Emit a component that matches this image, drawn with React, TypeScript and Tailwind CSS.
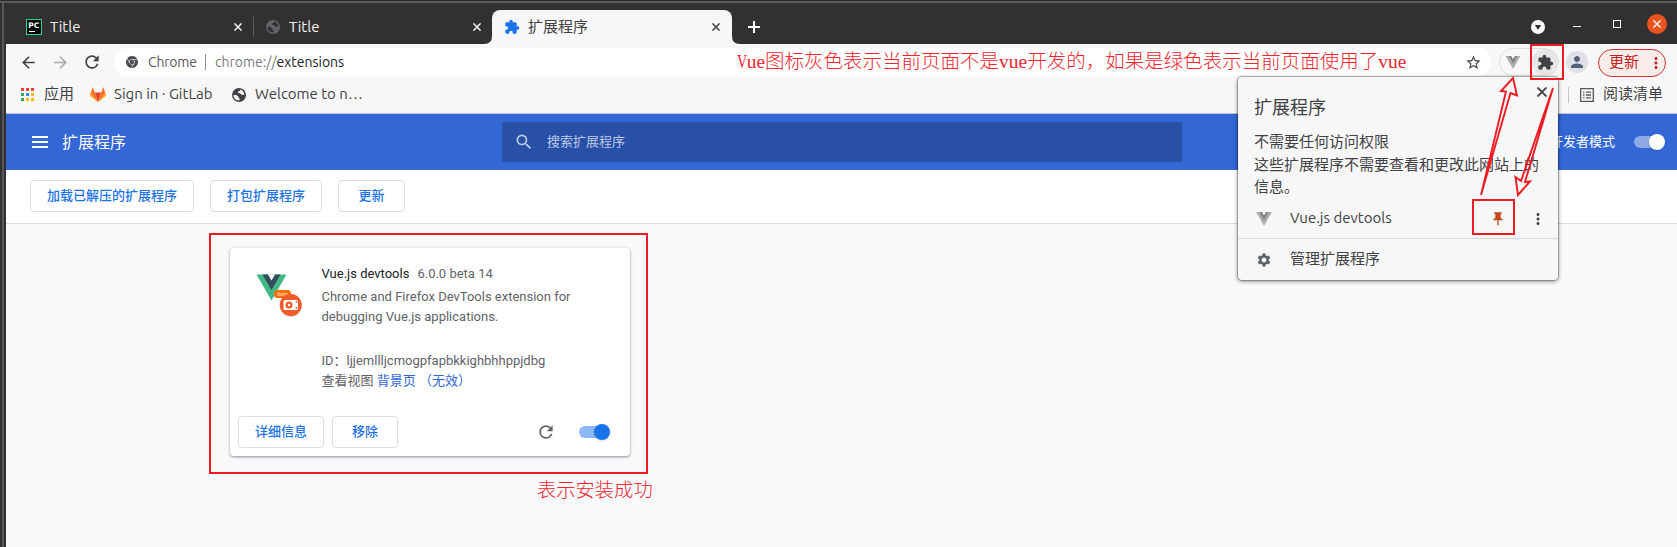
import React from "react";
import { MdStarBorder, MdRefresh, MdExtension, MdPerson, MdSettings, MdSearch, MdMoreVert, MdArrowBack, MdArrowForward, MdPushPin } from "react-icons/md";
import { SiGooglechrome } from "react-icons/si";

const uiFont = "font-['Ubuntu','Noto_Sans','Noto_Sans_CJK_SC',sans-serif]";
const webFont = "font-['Roboto','Noto_Sans_CJK_SC',sans-serif]";
const noteFont = "font-['Liberation_Serif','Noto_Sans_CJK_SC',serif]";

function Close({ className = "h-[8px] w-[8px]" }: { className?: string }) {
  return (
    <svg className={"shrink-0 " + className} viewBox="0 0 8 8" fill="none" stroke="currentColor" strokeWidth="1.5">
      <path d="M.4 .4 7.6 7.6M7.6 .4 .4 7.6" />
    </svg>
  );
}

function Globe({ className = "", cut }: { className?: string; cut: string }) {
  return (
    <svg className={"h-[14px] w-[14px] " + className} viewBox="0 0 14 14">
      <circle cx="7" cy="7" r="7" fill="currentColor" />
      <path d="M1.4 7.2c1.8-.5 3.7 0 4.6 1 .7.8.3 1.700 1.500 2v2.200C4 12.600 1.500 10.300 1.400 7.200Z" fill={cut} />
      <path d="M8.300 1.600c-.2 1-.6 1.600-1.800 1.800-.8.100-1 .9-.3 1.300.9.500 2.300.200 2.700 1.200.4 1.100 1.700 1.100 3.400.7C12 4 10.600 2.200 8.300 1.600Z" fill={cut} />
    </svg>
  );
}

function VueMark({ className = "", outer, inner }: { className?: string; outer: string; inner: string }) {
  return (
    <svg className={className} viewBox="0 0 30 26">
      <path d="M0 0h30L15 26Z" fill={outer} />
      <path d="M6 0h5.500L15 6l3.500-6H24L15 15.600Z" fill={inner} />
      <path d="M11.500 0h7L15 6Z" fill="#f7f7f7" />
    </svg>
  );
}

function Tabs() {
  return (
    <div className="flex h-[41px] shrink-0 bg-[#333031] pt-[7px] text-[15px] text-[#f4f4f4]">
      <div className="flex h-[34px] w-[247px] items-center pl-5">
        <svg className="h-4 w-4 shrink-0" viewBox="0 0 16 16">
          <rect x=".5" y=".5" width="15" height="15" fill="#080808" stroke="#21d789" />
          <text x="2.200" y="8.500" fill="#fff" fontSize="7.500" fontWeight="700" fontFamily="DejaVu Sans" textLength="11">PC</text>
          <path d="M3 12.500h6" stroke="#fff" />
        </svg>
        <span className="ml-2 w-[184px]">Title</span>
        <Close />
      </div>
      <div className="flex h-[34px] w-[239px] items-center">
        <div className="h-5 w-px bg-[#5c5a5b]" />
        <Globe className="ml-3 text-[#5f6368]" cut="#333031" />
        <span className="ml-[9px] w-[184px]">Title</span>
        <Close />
      </div>
      <div className="relative flex h-[34px] w-[240px] items-center rounded-t-[8px] bg-[#f7f7f7] pl-[12px] text-[#414141]">
        <svg className="absolute -left-2 bottom-0 h-2 w-2" viewBox="0 0 8 8"><path d="M8 0v8H0Q8 8 8 0Z" fill="#f7f7f7" /></svg>
        <svg className="absolute -right-2 bottom-0 h-2 w-2" viewBox="0 0 8 8"><path d="M0 0v8H8Q0 8 0 0Z" fill="#f7f7f7" /></svg>
        <MdExtension className="h-4 w-4 text-[#1a73e8]" />
        <span className="ml-2 w-[184px]">扩展程序</span>
        <Close />
      </div>
      <svg className="ml-[16px] mt-[11px] h-3 w-3" viewBox="0 0 12 12"><path d="M0 6h12M6 0v12" stroke="#fff" strokeWidth="2" /></svg>
      <div className="ml-auto flex pr-[10px]">
        <svg className="mt-[10px] h-[14px] w-[14px]" viewBox="0 0 14 14"><circle cx="7" cy="7" r="7" fill="#fff" /><path d="M3.700 5h6.600L7 9.700Z" fill="#333031" /></svg>
        <div className="ml-[28px] mt-[16px] h-px w-2 bg-white" />
        <div className="ml-[32px] mt-[10px] h-2 w-2 border border-white" />
        <div className="ml-[26px] mt-1 flex h-5 w-5 items-center justify-center rounded-full bg-[#e95420]"><Close /></div>
      </div>
    </div>
  );
}

function NoteV() {
  return <span className="inline-block w-[9.7px] font-normal"><span className="inline-block origin-left scale-x-[0.72]">V</span></span>;
}

function AddressBar() {
  return (
    <div className="flex h-8 shrink-0 items-center pl-[13px] pt-1 text-[15px] text-[#3f4144]">
      <MdArrowBack className="h-[19px] w-[19px]" />
      <MdArrowForward className="ml-[13px] h-[19px] w-[19px] text-[#a9a9a9]" />
      <MdRefresh className="ml-[12px] h-5 w-5" />
      <div className="ml-[12px] flex h-7 w-[1377px] items-center rounded-full bg-white pl-3">
        <SiGooglechrome className="h-3 w-3 text-[#4c4e51]" />
        <span className="ml-[10px] w-[57px] whitespace-nowrap text-[14px] tracking-[-0.2px] text-[#55585c]">Chrome</span>
        <div className="h-4 w-px bg-[#8d8f92]" />
        <div className="ml-[9px] w-[522px] whitespace-nowrap text-[14px] text-[#777b80]">chrome://<span className="text-[#202124]">extensions</span></div>
        <div className={"whitespace-nowrap text-[19.5px] font-light leading-7 text-[#f0252e] " + noteFont}>
          <NoteV /><span className="font-normal">ue</span>图标灰色表示当前页面不是<span className="font-normal">vue</span>开发的，如果是绿色表示当前页面使用了<span className="font-normal">vue</span>
        </div>
        <MdStarBorder className="ml-auto mr-[9px] h-[17px] w-[17px] shrink-0" />
      </div>
      <div className="ml-2 flex h-7 w-[60px] items-center justify-between rounded-full border border-[#dcdddd] pl-[5px]">
        <VueMark className="h-[13px] w-4" outer="#aeaeae" inner="#858585" />
        <div className="flex h-[26px] w-[26px] items-center justify-center rounded-full bg-[#e6e6e6]"><MdExtension className="h-[17px] w-[17px]" /></div>
      </div>
      <div className="ml-[7px] flex h-[22px] w-[22px] items-center justify-center rounded-full bg-[#dee1e6] text-[#546078]"><MdPerson className="h-[18px] w-[18px]" /></div>
      <div className="ml-[10px] mt-px flex h-7 w-[68px] items-center rounded-full border border-[#cf332a] bg-[#faecea] pl-[10px] text-[#c5221f]">
        <span>更新</span><MdMoreVert className="ml-2 h-[18px] w-[18px]" />
      </div>
    </div>
  );
}

const appColors = ["bg-[#ea4335]", "bg-[#ea4335]", "bg-[#ea4335]", "bg-[#34a853]", "bg-[#4285f4]", "bg-[#fbbc04]", "bg-[#34a853]", "bg-[#fbbc04]", "bg-[#fbbc04]"];

function Bookmarks() {
  return (
    <div className="flex h-[38px] shrink-0 items-center border-b border-[#bfc3cb] pl-[15px] text-[15px] text-[#3f4144]">
      <div className="grid grid-cols-3 gap-[2px]">
        {appColors.map((c, i) => <div key={i} className={"h-[3px] w-[3px] " + c} />)}
      </div>
      <span className="ml-[10px]">应用</span>
      <svg className="ml-4 h-[15px] w-4" viewBox="0 0 16 15">
        <path d="M2.800 0 .3 7.200 8 15Z" fill="#fc6d26" /><path d="M13.200 0l2.500 7.200L8 15Z" fill="#fc6d26" />
        <path d="M.9 5.500 0 8.800 8 15ZM15.100 5.500l.9 3.300L8 15Z" fill="#fca326" /><path d="M4.800 5.500h6.400L8 15Z" fill="#e24329" />
      </svg>
      <span className="ml-2 w-[118px] whitespace-nowrap">Sign in · GitLab</span>
      <Globe className="text-[#3f4144]" cut="#f7f7f7" />
      <span className="ml-[9px] whitespace-nowrap">Welcome to n…</span>
      <div className="ml-auto flex items-center pr-[14px]">
        <div className="h-4 w-px bg-[#c5c7ca]" />
        <svg className="ml-[11px] h-[14px] w-[14px]" viewBox="0 0 14 14" fill="none" stroke="#55585b" strokeWidth="1.300"><path d="M.7.7h12.600v12.600H.7ZM3 4.200h1.500M6 4.200h5M3 7h1.500M6 7h5M3 9.800h1.500M6 9.800h5" /></svg>
        <span className="ml-[9px]">阅读清单</span>
      </div>
    </div>
  );
}

function Button({ children, className }: { children: React.ReactNode; className: string }) {
  return <div className={"flex h-8 items-center justify-center rounded-[4px] border border-[#dadce0] text-[13px] font-medium text-[#1a73e8] " + className}>{children}</div>;
}

function Card() {
  return (
    <div className="flex h-[208px] w-[400px] flex-col rounded-[4px] bg-white text-[13px] leading-5 text-[#5f6368] shadow-[0_1px_2px_rgba(60,64,67,0.4),0_1px_3px_1px_rgba(60,64,67,0.15)]">
      <div className="flex h-[160px] pt-4">
        <div className="ml-[26px] mt-[10px] w-[65.500px] shrink-0">
          <svg className="h-12 w-12" viewBox="0 0 48 48">
            <path d="M.5 .5H30.500L15.500 26.500Z" fill="#41b883" />
            <path d="M6.500 .5h5.500l3.500 6 3.500-6h5.500l-9 15.600Z" fill="#35495e" />
            <path d="M12 .5h7l-3.500 6Z" fill="#fff" />
            <circle cx="35" cy="32" r="11" fill="#000" opacity=".15" />
            <rect x="18" y="16" width="17" height="8" rx="3.500" fill="#ff6d00" />
            <text x="21.500" y="22" fill="#ffe0cc" fontSize="5.500" fontFamily="Roboto">beta</text>
            <circle cx="34.700" cy="31" r="11" fill="#f05a28" />
            <rect x="27.500" y="26" width="14.500" height="10" rx="1.500" fill="#fff" />
            <circle cx="33" cy="31" r="3.500" fill="#f05a28" /><circle cx="33" cy="31" r="1.300" fill="#fff" />
            <path d="M40.300 27v2M40.300 33v2" stroke="#f05a28" />
          </svg>
        </div>
        <div>
          <div className="h-[23px]"><span className="text-[#202124]">Vue.js devtools</span><span className="ml-2">6.0.0 beta 14</span></div>
          <div className="h-[64px] w-[270px]">Chrome and Firefox DevTools extension for debugging Vue.js applications.</div>
          <div>ID：ljjemllljcmogpfapbkkighbhhppjdbg</div>
          <div>查看视图 <span className="text-[#3367d6]">背景页 （无效）</span></div>
        </div>
      </div>
      <div className="flex h-12 items-center pl-2">
        <Button className="w-[86px]">详细信息</Button>
        <Button className="ml-2 w-[66px]">移除</Button>
        <MdRefresh className="ml-[138px] h-5 w-5" />
        <div className="ml-[23px] flex h-3 w-[28px] items-center justify-end rounded-full bg-[#8cb8f3]"><div className="-mr-[3px] h-4 w-4 shrink-0 rounded-full bg-[#1a73e8] shadow" /></div>
      </div>
    </div>
  );
}

function Popup() {
  return (
    <div className={"absolute left-[1238px] top-[77px] h-[203px] w-[320px] rounded-[4px] bg-[#f7f7f7] text-[15px] text-[#3f4144] shadow-[0_0_0_1px_rgba(0,0,0,0.2),0_1px_4px_rgba(0,0,0,0.55)] " + uiFont}>
      <div className="flex h-[54px] justify-between pl-4 pr-[11px] pt-[17px] text-[18px] leading-[27px]"><span>扩展程序</span><Close className="-mt-[7px] h-[10px] w-[10px]" /></div>
      <div className="h-[68px] whitespace-nowrap pl-4 leading-[22.5px]">不需要任何访问权限<br />这些扩展程序不需要查看和更改此网站上的<br />信息。</div>
      <div className="flex h-[40px] items-center border-b border-[#d9dadb] pl-[18px]">
        <VueMark className="h-[14px] w-4" outer="#b0b0b0" inner="#858585" />
        <span className="ml-[18px] w-[200px]">Vue.js devtools</span>
        <MdPushPin className="h-4 w-4 text-[#c5481d]" />
        <MdMoreVert className="ml-[23px] h-[18px] w-[18px]" />
      </div>
      <div className="flex h-[41px] items-center pl-[18px]"><MdSettings className="h-4 w-4 text-[#5f6368]" /><span className="ml-[18px]">管理扩展程序</span></div>
    </div>
  );
}

export default function App() {
  return (
    <div className={"relative flex h-[547px] w-[1677px] flex-col overflow-hidden bg-[#2b2b2b] " + uiFont}>
      <div className="h-px shrink-0 bg-[#28292b]" />
      <div className="h-[2px] shrink-0 bg-[#5b5b5b]" />
      <div className="flex min-h-0 flex-1">
        <div className="w-[2px] bg-[#303234]" /><div className="w-[2px] bg-[#595757]" /><div className="w-[2px] bg-[#333031]" />
        <div className="flex min-w-0 flex-1 flex-col bg-[#f7f7f7]">
          <Tabs />
          <AddressBar />
          <Bookmarks />
          <div className={"flex min-h-0 flex-1 flex-col bg-[#f8f9fb] " + webFont}>
            <div className="flex h-14 shrink-0 items-center bg-[#3367d6] text-white">
              <div className="ml-[26px] flex h-3 w-4 flex-col justify-between"><div className="h-[2px] bg-white" /><div className="h-[2px] bg-white" /><div className="h-[2px] bg-white" /></div>
              <span className="ml-[14px] w-[440px] pt-px text-[16px]">扩展程序</span>
              <div className="flex h-10 w-[680px] items-center rounded-[2px] bg-[#2850a7] pl-3 text-[13px] text-[#bccbe9]"><MdSearch className="h-5 w-5" /><span className="ml-[13px]">搜索扩展程序</span></div>
              <span className="ml-[368px] text-[13px]">开发者模式</span>
              <div className="ml-[19px] flex h-3 w-[28px] items-center justify-end rounded-full bg-[#8da9e6]"><div className="-mr-[3px] h-4 w-4 shrink-0 rounded-full bg-white shadow" /></div>
            </div>
            <div className="flex h-[54px] shrink-0 gap-4 border-b border-[#dadce0] bg-white pl-6 pt-[10px]">
              <Button className="w-[164px]">加载已解压的扩展程序</Button><Button className="w-[112px]">打包扩展程序</Button><Button className="w-[67px]">更新</Button>
            </div>
            <div className="pl-[224px] pt-6"><Card /></div>
            <div className={"ml-[531px] mt-5 text-[19.3px] font-light leading-[30px] text-[#f0252e] " + noteFont}>表示安装成功</div>
          </div>
        </div>
      </div>
      <Popup />
      <div className="absolute left-[209px] top-[233px] h-[241px] w-[439px] border-2 border-[#ed1c24]" />
      <div className="absolute left-[1530px] top-[44px] h-9 w-[34px] border-2 border-[#ed1c24]" />
      <div className="absolute left-[1472px] top-[199px] h-9 w-[43px] border-2 border-[#ed1c24]" />
      <svg className="absolute left-[1465px] top-[70px] h-[135px] w-[100px]" viewBox="0 0 100 135" fill="none" stroke="#ed1c24" strokeWidth="1.9">
        <path d="M16 125 41 21.500 36 21 48 8 52 25.500 45.500 23Z" />
        <path d="M88 18 60 112 65 111.500 53 125 50.500 107 56 111Z" />
      </svg>
    </div>
  );
}
